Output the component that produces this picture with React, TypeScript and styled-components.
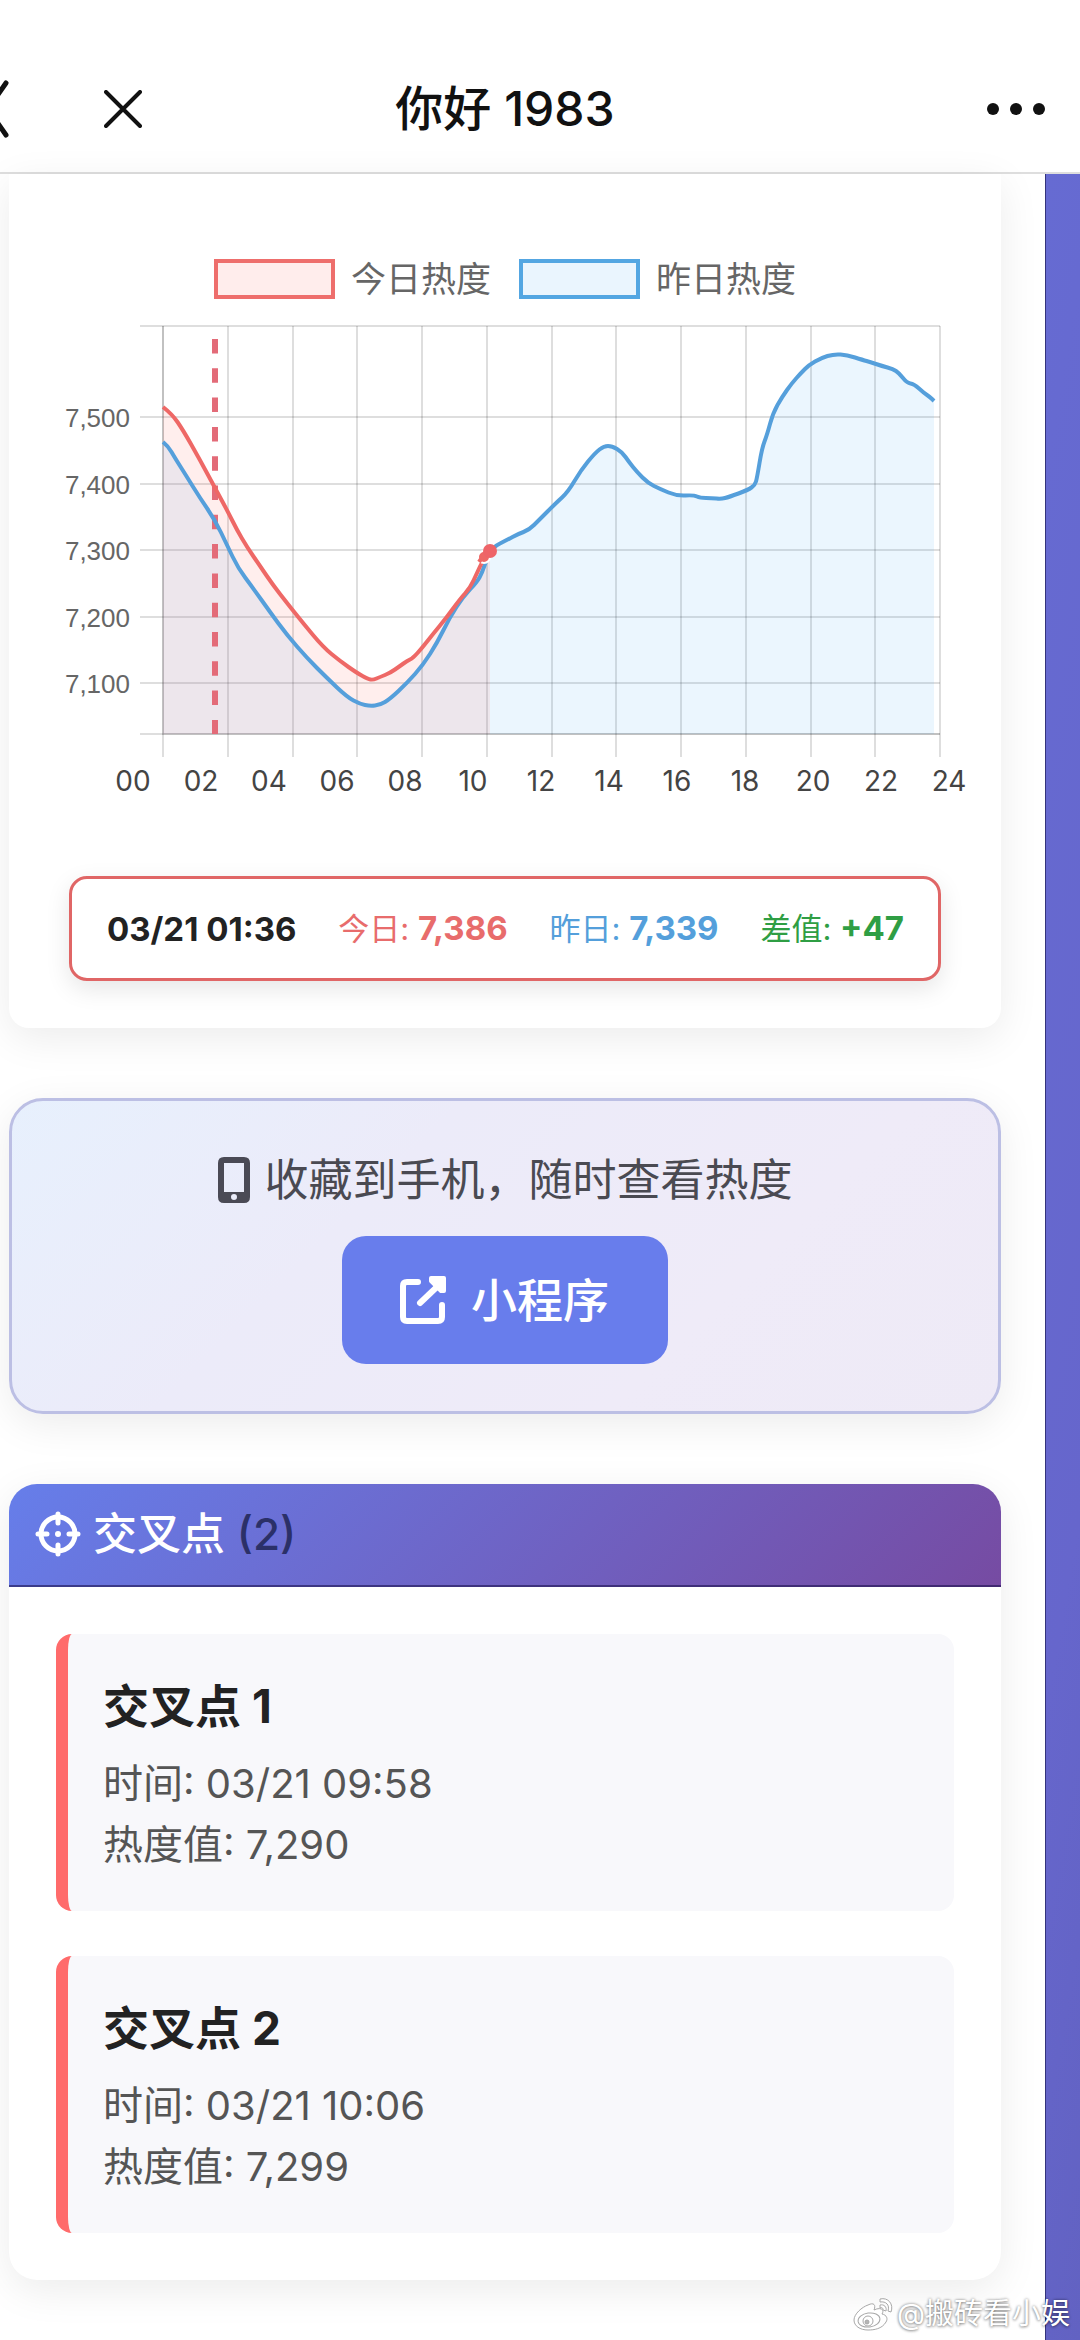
import React from "react";
import styled, { createGlobalStyle } from "styled-components";

const GlobalStyle = createGlobalStyle`
  *, *::before, *::after { box-sizing: border-box; }
  body {
    margin: 0;
    background: #ffffff;
    color: #222222;
    font-family: Inter, "Noto Sans CJK SC", sans-serif;
  }
  h1, h2, h3, p { margin: 0; font-weight: inherit; }
`;

const Screen = styled.div`
  position: relative;
  overflow: hidden;
`;

const NavBar = styled.header`
  display: grid;
  grid-template-columns: 1fr auto 1fr;
  align-items: center;
  height: 174px;
  padding: 46px 34px 0 0;
  background: #ffffff;
  border-bottom: 2px solid #dedede;
`;

const NavGroup = styled.div<{ $end?: boolean }>`
  display: flex;
  align-items: center;
  gap: 95px;
  justify-content: ${(p) => (p.$end ? "flex-end" : "flex-start")};
`;

const IconButton = styled.button`
  display: flex;
  padding: 0;
  border: 0;
  background: none;
  color: #111111;
  cursor: pointer;
`;

const NavTitle = styled.h1`
  margin-right: 36px;
  font-size: 48px;
  line-height: 64px;
  font-weight: 500;
  color: #111111;
`;

const Backdrop = styled.main`
  padding-right: 34px;
  background: linear-gradient(100deg, #667eea 0%, #6666cc 90%, #6262c2 100%);
`;

const Page = styled.div`
  display: flex;
  flex-direction: column;
  gap: 70px;
  padding: 0 44px 60px 9px;
  background: #ffffff;
  border-right: 1px solid #34347c;
`;

const Card = styled.section<{ $flatTop?: boolean }>`
  background: #ffffff;
  border-radius: ${(p) => (p.$flatTop ? "0 0 20px 20px" : "28px")};
  box-shadow: 0 10px 40px rgba(0, 0, 0, 0.08);
`;

const ChartCard = styled(Card)`
  padding: 85px 0 47px;
`;

const Legend = styled.ul`
  display: flex;
  justify-content: center;
  gap: 28px;
  margin: 0;
  padding: 0;
  list-style: none;
`;

const LegendItem = styled.li`
  display: flex;
  align-items: center;
  gap: 16px;
  height: 40px;
  font-size: 35px;
  line-height: 40px;
  color: #666666;
`;

const Swatch = styled.span<{ $line: string; $fill: string }>`
  width: 121px;
  height: 40px;
  border: 4px solid ${(p) => p.$line};
  background: ${(p) => p.$fill};
`;

const Plot = styled.svg`
  display: block;
  width: 100%;
  height: auto;
`;

const TickText = styled.text`
  font-family: "Liberation Sans", Arial, sans-serif;
  font-size: 26px;
  fill: #666666;
`;

const Hours = styled.div`
  display: grid;
  grid-template-columns: repeat(13, 1fr);
  padding: 0 18px 0 90px;
  font-size: 28px;
  line-height: 40px;
  text-align: center;
  color: #444444;
`;

const Reading = styled.div`
  display: flex;
  align-items: center;
  justify-content: space-between;
  height: 105px;
  margin: 75px 60px 0;
  padding: 0 34px 0 35px;
  border: 3px solid #e06666;
  border-radius: 18px;
  background: #ffffff;
  box-shadow: 0 8px 24px rgba(0, 0, 0, 0.1);
  font-size: 31px;
  line-height: 40px;
  white-space: nowrap;
`;

const ReadingTime = styled.time`
  font-size: 33px;
  font-weight: 700;
  color: #222222;
`;

const ReadingValue = styled.span<{ $color: string }>`
  color: ${(p) => p.$color};

  strong {
    font-size: 33px;
    font-weight: 700;
  }
`;

const Promo = styled.section`
  display: flex;
  flex-direction: column;
  align-items: center;
  gap: 24px;
  padding: 47px 32px 47px;
  border: 3px solid #bcbfe4;
  border-radius: 34px;
  background: linear-gradient(135deg, #e7f0fd 0%, #ecebf9 35%, #efebf8 70%, #eeeaf6 100%);
  box-shadow: 0 10px 40px rgba(0, 0, 0, 0.08);
`;

const PromoText = styled.p`
  display: flex;
  align-items: center;
  gap: 15px;
  font-size: 44px;
  line-height: 64px;
  color: #4a4a52;
`;

const PromoButton = styled.button`
  display: flex;
  align-items: center;
  gap: 22px;
  height: 128px;
  padding: 0 59px 0 57px;
  border: 0;
  border-radius: 24px;
  background: #687dec;
  color: #ffffff;
  font: 500 46px/64px Inter, "Noto Sans CJK SC", sans-serif;
  cursor: pointer;
`;

const CardHead = styled.h2`
  display: flex;
  align-items: center;
  gap: 12px;
  height: 103px;
  padding: 0 26px 2px;
  border-bottom: 2px solid rgba(30, 20, 80, 0.6);
  border-radius: 28px 28px 0 0;
  background: linear-gradient(135deg, #667eea 0%, #764ba2 100%);
  background-origin: border-box;
  color: #ffffff;
  font-size: 44px;
  line-height: 64px;
  font-weight: 500;
`;

const Count = styled.span`
  color: #2b3068;
`;

const Points = styled.ul`
  display: flex;
  flex-direction: column;
  gap: 45px;
  margin: 0;
  padding: 47px;
  list-style: none;
`;

const Point = styled.li`
  padding: 37px 36px 36px 35px;
  border-left: 12px solid #ff6b6b;
  border-radius: 16px;
  background: #f8f8fb;
  font-size: 40px;
  line-height: 61px;
  color: #555555;
`;

const PointTitle = styled.h3`
  margin-bottom: 12px;
  font-size: 46px;
  line-height: 70px;
  font-weight: 700;
  color: #222222;
`;

const Watermark = styled.div`
  position: absolute;
  right: 10px;
  bottom: 6px;
  display: flex;
  align-items: center;
  gap: 4px;
  color: #ffffff;
  font-size: 29px;
  line-height: 40px;
  text-shadow: 0 0 3px rgba(0, 0, 0, 0.45), 0 1px 3px rgba(0, 0, 0, 0.3);
`;

type Pt = [number, number];

const TODAY: Pt[] = [
  [163, 407], [172, 414], [183, 430], [200, 460], [215, 488], [227, 510], [237, 530],
  [247, 547], [260, 566], [273, 585], [287, 603], [303, 623], [323, 647], [340, 661],
  [357, 673], [368, 679], [373, 680], [380, 677], [390, 673], [400, 666], [407, 661],
  [413, 658], [422, 648], [433, 634], [447, 617], [460, 599], [470, 588], [477, 573],
  [483, 560], [490, 551],
];

const YESTERDAY: Pt[] = [
  [163, 442], [168, 446], [175, 458], [187, 477], [200, 498], [215, 520], [227, 545],
  [238, 568], [253, 588], [270, 612], [287, 635], [307, 658], [327, 678], [347, 697],
  [360, 704], [370, 706], [380, 705], [390, 699], [407, 683], [423, 665], [437, 643],
  [450, 617], [463, 597], [477, 582], [482, 573], [487, 558], [493, 547], [507, 540],
  [518, 534], [529, 530], [539, 520], [556, 503], [568, 492], [581, 470], [595, 453],
  [604, 446], [612, 446], [622, 452], [629, 462], [637, 472], [648, 483], [660, 489],
  [677, 496], [694, 495], [700, 498], [712, 498], [721, 499], [729, 497], [748, 490],
  [755, 485], [757, 478], [762, 448], [767, 435], [773, 413], [782, 397], [792, 383],
  [801, 373], [809, 365], [821, 358], [834, 354], [847, 355], [863, 360], [870, 362],
  [882, 366], [893, 369], [899, 373], [907, 383], [914, 384], [924, 393], [930, 397],
  [934, 401],
];

/** Rounds the corners of a polyline by curving through segment midpoints. */
function smooth(pts: Pt[]): string {
  let d = `M${pts[0][0]} ${pts[0][1]}`;
  for (let i = 1; i < pts.length - 1; i++) {
    const [x, y] = pts[i];
    const [nx, ny] = pts[i + 1];
    d += ` Q${x} ${y} ${(x + nx) / 2} ${(y + ny) / 2}`;
  }
  const last = pts[pts.length - 1];
  return `${d} L${last[0]} ${last[1]}`;
}

const BASE = 734;
const area = (pts: Pt[]) => `${smooth(pts)} V${BASE} H${pts[0][0]} Z`;

const COLUMNS = Array.from({ length: 13 }, (_, i) => Math.round(163 + i * 64.75));
const ROWS: [string, number][] = [
  ["7,500", 417], ["7,400", 484], ["7,300", 550], ["7,200", 617], ["7,100", 683],
];
const HOURS = ["00", "02", "04", "06", "08", "10", "12", "14", "16", "18", "20", "22", "24"];

function HeatPlot() {
  return (
    <Plot viewBox="9 299 992 462" role="img" aria-label="今日热度与昨日热度">
      <g stroke="#000000" strokeOpacity="0.13" strokeWidth="2">
        {[326, ...ROWS.map((r) => r[1]), BASE].map((y) => (
          <line key={y} x1="140" x2="940" y1={y} y2={y} />
        ))}
        {COLUMNS.map((x) => (
          <line key={x} x1={x} x2={x} y1="326" y2="757" />
        ))}
        <path d="M163 326V734H940" fill="none" />
      </g>
      {ROWS.map(([label, y]) => (
        <TickText key={label} x="130" y={y + 10} textAnchor="end">{label}</TickText>
      ))}
      <path d={area(YESTERDAY)} fill="#36a2f5" fillOpacity="0.1" />
      <path d={area(TODAY)} fill="#ff5a4a" fillOpacity="0.1" />
      <line x1="215" x2="215" y1="339" y2="734" stroke="#e36b78" strokeWidth="6" strokeDasharray="14.5 14.8" />
      <g fill="none" strokeWidth="4" strokeLinejoin="round">
        <path d={smooth(YESTERDAY)} stroke="#559fdb" />
        <path d={smooth(TODAY)} stroke="#ee6866" />
      </g>
      <circle cx="484" cy="557" r="6" fill="#ee6866" stroke="#ffffff" strokeWidth="2" />
      <path d="M479 562L486 552" stroke="#ee6866" strokeWidth="4" />
      <circle cx="490" cy="551" r="7" fill="#ee6468" />
    </Plot>
  );
}

const PhoneIcon = () => (
  <svg width="32" height="46" viewBox="0 0 32 46" aria-hidden="true">
    <path
      fill="#4a4a55"
      fillRule="evenodd"
      d="M6 0H26Q32 0 32 6V40Q32 46 26 46H6Q0 46 0 40V6Q0 0 6 0ZM6 6V35H26V6ZM16 37a3 3 0 1 0 0 6a3 3 0 0 0 0-6Z"
    />
  </svg>
);

const LaunchIcon = () => (
  <svg width="50" height="50" viewBox="0 0 50 50" fill="none" stroke="#ffffff" strokeWidth="6" strokeLinecap="round" aria-hidden="true">
    <path d="M19 7H8Q4 7 4 11V42Q4 46 8 46H39Q43 46 43 42V30" strokeLinejoin="round" />
    <path d="M21 28L41 9" />
    <path d="M32 3H45V16L42 16L32 6Z" fill="#ffffff" strokeWidth="4" strokeLinejoin="round" />
  </svg>
);

const TargetIcon = () => (
  <svg width="46" height="46" viewBox="0 0 46 46" fill="none" stroke="#ffffff" strokeWidth="5" strokeLinecap="round" aria-hidden="true">
    <circle cx="23" cy="23" r="17" />
    <path d="M23 3V12M23 34V43M3 23H12M34 23H43" />
    <circle cx="23" cy="23" r="3" fill="#ffffff" stroke="none" />
  </svg>
);

const WeiboIcon = () => (
  <svg width="40" height="34" viewBox="0 0 40 34" fill="#ffffff" stroke="#a8a8a8" strokeWidth="1" aria-hidden="true">
    <path d="M15 8C21 5 23 8 21 13C27 10 32 12 29 17C34 18 35 22 33 25C29 32 21 33 15 33C7 33 1 29 1 23C1 17 9 10 15 8Z" />
    <ellipse cx="16" cy="23" rx="11" ry="7" transform="rotate(-8 16 23)" />
    <circle cx="15" cy="24" r="5" />
    <circle cx="14" cy="25" r="2" fill="#b5b5b5" />
    <path d="M27 2C35 0 41 7 38 15L35 14C37 8 33 4 27 5Z" />
    <path d="M27 8C31 7 34 10 33 14L30 13C30 11 29 10 27 11Z" />
  </svg>
);

const POINTS = [
  { time: "03/21 09:58", heat: "7,290" },
  { time: "03/21 10:06", heat: "7,299" },
];

export default function App() {
  return (
    <Screen>
      <GlobalStyle />
      <NavBar>
        <NavGroup>
          <IconButton aria-label="返回">
            <svg width="9" height="60" viewBox="0 0 9 60" fill="none" stroke="currentColor" strokeWidth="5" strokeLinecap="round">
              <path d="M6 4L-12 30L6 56" />
            </svg>
          </IconButton>
          <IconButton aria-label="关闭">
            <svg width="38" height="38" viewBox="0 0 38 38" fill="none" stroke="currentColor" strokeWidth="4" strokeLinecap="round">
              <path d="M2 2L36 36M36 2L2 36" />
            </svg>
          </IconButton>
        </NavGroup>
        <NavTitle>你好 1983</NavTitle>
        <NavGroup $end>
          <IconButton aria-label="更多">
            <svg width="60" height="14" viewBox="0 0 60 14" fill="currentColor">
              <circle cx="7" cy="7" r="6" />
              <circle cx="30" cy="7" r="6" />
              <circle cx="53" cy="7" r="6" />
            </svg>
          </IconButton>
        </NavGroup>
      </NavBar>

      <Backdrop>
        <Page>
          <ChartCard $flatTop>
            <Legend>
              <LegendItem><Swatch $line="#ee6e6c" $fill="#ffedec" />今日热度</LegendItem>
              <LegendItem><Swatch $line="#53a6e2" $fill="#eaf5fe" />昨日热度</LegendItem>
            </Legend>
            <HeatPlot />
            <Hours>
              {HOURS.map((h) => <span key={h}>{h}</span>)}
            </Hours>
            <Reading>
              <ReadingTime>03/21 01:36</ReadingTime>
              <ReadingValue $color="#e86c6c">今日: <strong>7,386</strong></ReadingValue>
              <ReadingValue $color="#549fdb">昨日: <strong>7,339</strong></ReadingValue>
              <ReadingValue $color="#2f9e44">差值: <strong>+47</strong></ReadingValue>
            </Reading>
          </ChartCard>

          <Promo>
            <PromoText><PhoneIcon />收藏到手机，随时查看热度</PromoText>
            <PromoButton><LaunchIcon />小程序</PromoButton>
          </Promo>

          <Card>
            <CardHead>
              <TargetIcon />
              <span>交叉点 <Count>({POINTS.length})</Count></span>
            </CardHead>
            <Points>
              {POINTS.map((p, i) => (
                <Point key={p.time}>
                  <PointTitle>交叉点 {i + 1}</PointTitle>
                  <p>时间: {p.time}</p>
                  <p>热度值: {p.heat}</p>
                </Point>
              ))}
            </Points>
          </Card>
        </Page>
      </Backdrop>

      <Watermark><WeiboIcon />@搬砖看小娱</Watermark>
    </Screen>
  );
}
